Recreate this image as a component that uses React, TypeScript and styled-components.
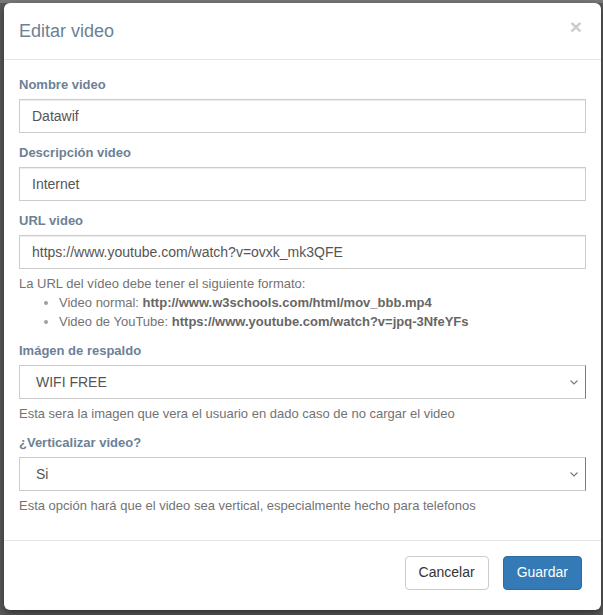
import React from 'react';
import styled, { createGlobalStyle } from 'styled-components';

const GlobalStyle = createGlobalStyle`
    html, body {
        margin: 0;
        padding: 0;
        background: #5a5a5a;
    }
    body {
        font-family: "Liberation Sans", Arial, Helvetica, sans-serif;
        font-size: 14px;
        line-height: 1.42857;
        color: #333;
    }
    * {
        box-sizing: border-box;
    }
`;

const Backdrop = styled.div`
    height: 615px;
    padding: 3px 2px 3px 4px;
    background: linear-gradient(#7a7a7a 0, #7a7a7a 3px, #5a5a5a 3px);
    overflow: hidden;
`;

const Modal = styled.div`
    background: #fff;
    border-radius: 6px;
    box-shadow: 0 3px 9px rgba(0, 0, 0, 0.5);
`;

const Header = styled.div`
    display: flex;
    justify-content: space-between;
    align-items: flex-start;
    padding: 16px 15px 14px;
    border-bottom: 1px solid #e5e5e5;
`;

const Title = styled.h4`
    margin: 0;
    font-size: 18px;
    font-weight: 500;
    line-height: 1.42857;
    color: #6d8196;
`;

const CloseButton = styled.button`
    margin: -3px 4px 0 0;
    padding: 0;
    border: 0;
    background: transparent;
    font-family: inherit;
    font-size: 21px;
    font-weight: bold;
    line-height: 1;
    color: #000;
    opacity: 0.2;
    cursor: pointer;
`;

const Body = styled.div`
    padding: 15px;
`;

const FormGroup = styled.div`
    margin-bottom: 10px;
`;

const Label = styled.label`
    display: block;
    margin-bottom: 5px;
    font-size: 13px;
    font-weight: bold;
    line-height: 19px;
    color: #6d8196;
`;

const TextInput = styled.input`
    display: block;
    width: 100%;
    height: 34px;
    padding: 6px 12px;
    font-family: inherit;
    font-size: 14px;
    line-height: 1.42857;
    color: #555;
    background: #fff;
    border: 1px solid #ccc;
    border-radius: 0;
    box-shadow: inset 0 1px 1px rgba(0, 0, 0, 0.075);
    outline: none;
`;

const SelectWrap = styled.div`
    position: relative;
`;

const Select = styled.select`
    display: block;
    width: 100%;
    height: 34px;
    padding: 6px 12px 6px 16px;
    font-family: inherit;
    font-size: 14px;
    color: #555;
    background: #fff;
    border: 1px solid #ccc;
    border-right-color: #7d7d7d;
    border-radius: 0;
    appearance: none;
    -webkit-appearance: none;
    outline: none;
`;

const Chevron = styled.svg`
    position: absolute;
    right: 8px;
    top: 15px;
    pointer-events: none;
`;

const HelpBlock = styled.div`
    margin-top: 5px;
    font-size: 13px;
    line-height: 19px;
    color: #737373;
`;

const FormatList = styled.ul`
    margin: 0;
    padding-left: 40px;
    list-style: disc;

    li::marker {
        color: #a0a0a0;
    }
`;

const Strong = styled.strong`
    color: #666;
`;

const Footer = styled.div`
    display: flex;
    justify-content: flex-end;
    gap: 14px;
    padding: 15px 19px 20px 15px;
    border-top: 1px solid #e5e5e5;
`;

const Button = styled.button<{ $primary?: boolean }>`
    padding: 6px 13px;
    font-family: inherit;
    font-size: 14px;
    line-height: 1.42857;
    border-radius: 4px;
    border: 1px solid ${({ $primary }) => ($primary ? '#2e6da4' : '#ccc')};
    background: ${({ $primary }) => ($primary ? '#337ab7' : '#fff')};
    color: ${({ $primary }) => ($primary ? '#fff' : '#333')};
    cursor: pointer;
`;

const SelectField: React.FC<{ value: string }> = ({ value }) => (
    <SelectWrap>
        <Select value={value} onChange={() => {}}>
            <option>{value}</option>
        </Select>
        <Chevron width="8" height="5" viewBox="0 0 8 5">
            <path d="M0.5 0.5 L4 4 L7.5 0.5" fill="none" stroke="#777" strokeWidth="1.1" />
        </Chevron>
    </SelectWrap>
);

const App: React.FC = () => {
    return (
        <>
            <GlobalStyle />
            <Backdrop>
                <Modal>
                    <Header>
                        <Title>Editar video</Title>
                        <CloseButton aria-label="Cerrar">×</CloseButton>
                    </Header>
                    <Body>
                        <FormGroup>
                            <Label>Nombre video</Label>
                            <TextInput readOnly value="Datawif" />
                        </FormGroup>
                        <FormGroup>
                            <Label>Descripción video</Label>
                            <TextInput readOnly value="Internet" />
                        </FormGroup>
                        <FormGroup>
                            <Label>URL video</Label>
                            <TextInput readOnly value="https://www.youtube.com/watch?v=ovxk_mk3QFE" />
                            <HelpBlock>
                                La URL del vídeo debe tener el siguiente formato:
                                <FormatList>
                                    <li>
                                        Video normal: <Strong>http://www.w3schools.com/html/mov_bbb.mp4</Strong>
                                    </li>
                                    <li>
                                        Video de YouTube: <Strong>https://www.youtube.com/watch?v=jpq-3NfeYFs</Strong>
                                    </li>
                                </FormatList>
                            </HelpBlock>
                        </FormGroup>
                        <FormGroup>
                            <Label>Imágen de respaldo</Label>
                            <SelectField value="WIFI FREE" />
                            <HelpBlock>Esta sera la imagen que vera el usuario en dado caso de no cargar el video</HelpBlock>
                        </FormGroup>
                        <FormGroup>
                            <Label>¿Verticalizar video?</Label>
                            <SelectField value="Si" />
                            <HelpBlock>Esta opción hará que el video sea vertical, especialmente hecho para telefonos</HelpBlock>
                        </FormGroup>
                    </Body>
                    <Footer>
                        <Button>Cancelar</Button>
                        <Button $primary>Guardar</Button>
                    </Footer>
                </Modal>
            </Backdrop>
        </>
    );
};

export default App;
